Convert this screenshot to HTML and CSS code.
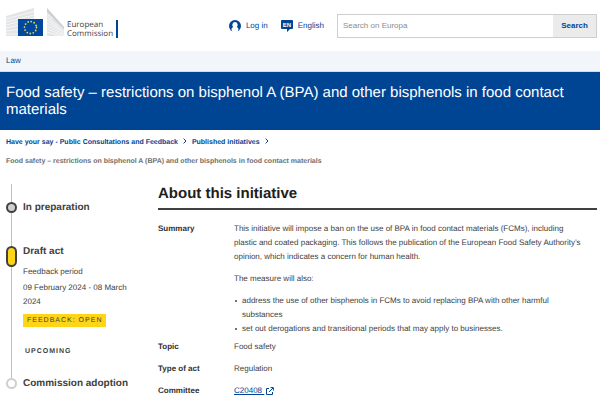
FILE: index.html
```html
<!DOCTYPE html>
<html lang="en">
<head>
<meta charset="utf-8">
<meta name="viewport" content="width=device-width, initial-scale=1">
<title>Food safety – restrictions on bisphenol A (BPA)</title>
<link rel="stylesheet" href="styles.css">
</head>
<body>
<header class="site-header">
  <a class="logo" href="#">
    <svg class="logo-mark" viewBox="0 0 58 30" aria-hidden="true">
      <path fill="#e3e5e6" d="M0 8 28 0V11H12V28H0ZM41 0 58 19V28H41Z"/>
      <g fill="none" stroke="#fafafa" stroke-width=".8">
        <path d="M0 11 28 3.500M0 14 28 7M0 17 28 10M0 20 12 17.500M0 23 12 21.500M0 26H12"/>
        <path d="M41 6 47 11M41 9 52 18M41 12 56 22M41 15 58 24M41 18 58 26M41 21 58 27.500M41 24 55 28"/>
      </g>
      <path fill="#cdd0d2" d="M41 0 58 19V21L41 4Z"/>
      <path fill="#00479d" d="M12 11H37V28H12Z"/>
      <g fill="none" stroke="#e6dc3b" stroke-width="1.800" stroke-linecap="round">
        <circle cx="24.500" cy="19.500" r="6" stroke-dasharray="0 3.1416"/>
      </g>
    </svg>
    <span class="logo-text">European<br>Commission</span>
  </a>
  <nav class="tools" aria-label="Site tools">
    <a class="tool" href="#">
      <svg class="tool-icon" viewBox="0 0 12 12" aria-hidden="true">
        <circle cx="6" cy="6" r="6" fill="#004494"/>
        <path fill="#fff" d="M6 2a2.900 2.900 0 0 1 1.700 5.100C9 7.600 9.500 8.500 9.500 10L8.500 12H3.500L2.500 10C2.500 8.500 3 7.600 4.300 7.100A2.900 2.900 0 0 1 6 2Z"/>
      </svg>
      Log in
    </a>
    <a class="tool" href="#">
      <svg class="tool-icon" viewBox="0 0 12 12" aria-hidden="true">
        <path fill="#004494" d="M1 0H11Q12 0 12 1V8Q12 9 11 9H9L6 12V9H1Q0 9 0 8V1Q0 0 1 0Z"/>
        <text class="lang-code" x="6" y="7" text-anchor="middle">EN</text>
      </svg>
      English
    </a>
  </nav>
  <form class="search" role="search">
    <input class="search-input" type="search" aria-label="Search on Europa" placeholder="Search on Europa">
    <button class="search-button" type="button">Search</button>
  </form>
</header>
<div class="site-bar"><a href="#">Law</a></div>
<div class="banner">
  <h1>Food safety – restrictions on bisphenol A (BPA) and other bisphenols in food contact materials</h1>
</div>
<nav class="breadcrumb" aria-label="Breadcrumb">
  <ol>
    <li><a href="#">Have your say - Public Consultations and Feedback</a>
      <svg class="chevron" viewBox="0 0 4 6" aria-hidden="true"><path d="M.6 .6 3 3 .6 5.400"/></svg></li>
    <li><a href="#">Published initiatives</a>
      <svg class="chevron" viewBox="0 0 4 6" aria-hidden="true"><path d="M.6 .6 3 3 .6 5.400"/></svg></li>
    <li class="current" aria-current="page">Food safety – restrictions on bisphenol A (BPA) and other bisphenols in food contact materials</li>
  </ol>
</nav>
<main class="content">
  <ol class="timeline">
    <li class="step step-done">
      <span class="marker"></span>
      <h3>In preparation</h3>
    </li>
    <li class="step step-active">
      <span class="marker"></span>
      <h3>Draft act</h3>
      <p>Feedback period</p>
      <p>09 February 2024 - 08 March 2024</p>
      <span class="tag">FEEDBACK: OPEN</span>
      <p class="upcoming">UPCOMING</p>
    </li>
    <li class="step step-next">
      <span class="marker"></span>
      <h3>Commission adoption</h3>
    </li>
  </ol>
  <section class="about">
    <h2>About this initiative</h2>
    <dl>
      <dt>Summary</dt>
      <dd class="summary">
        <p>This initiative will impose a ban on the use of BPA in food contact materials (FCMs), including plastic and coated packaging. This follows the publication of the European Food Safety Authority’s opinion, which indicates a concern for human health.</p>
        <p>The measure will also:</p>
        <ul>
          <li>address the use of other bisphenols in FCMs to avoid replacing BPA with other harmful substances</li>
          <li>set out derogations and transitional periods that may apply to businesses.</li>
        </ul>
      </dd>
      <dt>Topic</dt>
      <dd>Food safety</dd>
      <dt>Type of act</dt>
      <dd>Regulation</dd>
      <dt>Committee</dt>
      <dd><a class="ext" href="#">C20408&nbsp;</a>
        <svg class="ext-icon" viewBox="0 0 8 8" aria-hidden="true"><path d="M3 1.500H.5V7.500H6.500V5M3 5 7 1M4.500 .6H7.400V3.500"/></svg></dd>
    </dl>
  </section>
</main>
</body>
</html>
```
FILE: styles.css
```css
* {
  box-sizing: border-box;
}

body,
h1, h2, h3,
p, ol, ul, dl, dd {
  margin: 0;
  padding: 0;
}

body {
  background: #fff;
  color: #404040;
  font-family: "Liberation Sans", Arial, sans-serif;
  font-size: 8px;
  line-height: 14px;
  text-rendering: geometricPrecision;
}

a {
  color: #004494;
  text-decoration: none;
}

ol,
ul {
  list-style: none;
}

.site-header {
  display: flex;
  align-items: flex-start;
  min-height: 51px;
  padding: 8px 3px 0 6px;
}

.logo {
  display: flex;
  align-items: flex-end;
}

.logo-mark {
  width: 58px;
  height: 30px;
}

.logo-text {
  margin-left: 3px;
  padding-right: 3px;
  border-right: 2px solid #004494;
  color: #404040;
  font-family: "Open Sans", "Noto Sans", sans-serif;
  line-height: 9px;
}

.tools {
  display: flex;
  gap: 13px;
  margin-left: auto;
  padding-top: 11px;
}

.tool {
  display: flex;
  align-items: center;
  gap: 5px;
}

.tool-icon {
  width: 12px;
  height: 12px;
}

.lang-code {
  fill: #fff;
  font-size: 6px;
  font-weight: bold;
}

.search {
  display: flex;
  width: 44%;
  height: 24px;
  margin: 6px 0 0 13px;
  border: 1px solid #cfcfcf;
}

.search-input {
  flex: 1;
  min-width: 0;
  padding: 0 5px;
  border: 0;
  background: #fff;
  font: inherit;
}

.search-input::placeholder {
  color: #8c8c8c;
}

.search-button {
  width: 43px;
  padding: 0;
  border: 0;
  background: #ebebeb;
  color: #004494;
  font: inherit;
  font-weight: bold;
}

.site-bar {
  padding: 3px 6px;
  border-bottom: 1px solid #d5dbe6;
  background: #f2f5f9;
}

.banner {
  padding: 12px 6px;
  background: #004494;
  color: #fff;
}

h1 {
  font-size: 15px;
  font-weight: normal;
  line-height: 17px;
}

.breadcrumb {
  padding: 3px 6px;
  font-size: 7px;
  font-weight: bold;
  line-height: 19px;
}

.breadcrumb ol {
  display: flex;
  flex-wrap: wrap;
  column-gap: 5px;
}

.chevron {
  width: 4px;
  height: 6px;
  margin-left: 3px;
  fill: none;
  stroke: #004494;
}

.current {
  flex-basis: 100%;
  color: #707070;
}

.content {
  display: grid;
  grid-template-columns: 130px 1fr;
  column-gap: 22px;
  padding: 10px 3px 4px 6px;
}

.step {
  position: relative;
  padding-left: 17px;
}

.step::before {
  position: absolute;
  top: 0;
  bottom: 0;
  left: 5px;
  width: 1px;
  background: #bfbfbf;
  content: "";
}

.marker {
  position: absolute;
  left: 0;
  width: 11px;
  height: 11px;
  border: 2px solid #404040;
  border-radius: 6px;
  background: #cfcfcf;
}

.step h3 {
  font-size: 10px;
  line-height: 16px;
}

.step-done {
  padding-top: 16px;
  padding-bottom: 28px;
}

.step-done .marker {
  top: 18px;
}

.step-active {
  padding-bottom: 17px;
}

.step-active .marker {
  top: 2px;
  height: 21px;
  background: #ffd617;
}

.step-active h3 {
  margin-bottom: 5px;
}

.step-active p + p {
  margin-top: 2px;
}

.tag {
  display: inline-block;
  margin-top: 5px;
  padding: 0 4px;
  background: #ffd617;
  font-size: 7px;
  letter-spacing: 1px;
  line-height: 13px;
}

.step-active .upcoming {
  margin-top: 18px;
  padding-left: 2px;
  font-size: 7px;
  font-weight: bold;
  letter-spacing: 1px;
}

.step-next h3 {
  white-space: nowrap;
}

.step-next::before {
  bottom: 50%;
}

.step-next .marker {
  top: 2px;
  border-color: #cfcfcf;
  background: #fff;
}

h2 {
  padding: 1px 0 6px;
  border-bottom: 2px solid #404040;
  color: #202020;
  font-size: 15px;
  line-height: 17px;
}

dl {
  display: grid;
  grid-template-columns: 68px 1fr;
  column-gap: 8px;
  row-gap: 8px;
  padding-top: 12px;
}

dt {
  color: #303030;
  font-weight: bold;
}

.summary {
  margin-bottom: -4px;
  padding-right: 12px;
}

.summary p {
  margin-bottom: 8px;
}

.summary li {
  position: relative;
  padding-left: 8px;
}

.summary li::before {
  position: absolute;
  top: 6px;
  left: 1px;
  width: 2px;
  height: 2px;
  border-radius: 50%;
  background: #404040;
  content: "";
}

.ext {
  text-decoration: underline;
}

.ext-icon {
  width: 8px;
  height: 8px;
  fill: none;
  stroke: #004494;
  vertical-align: middle;
}
```
